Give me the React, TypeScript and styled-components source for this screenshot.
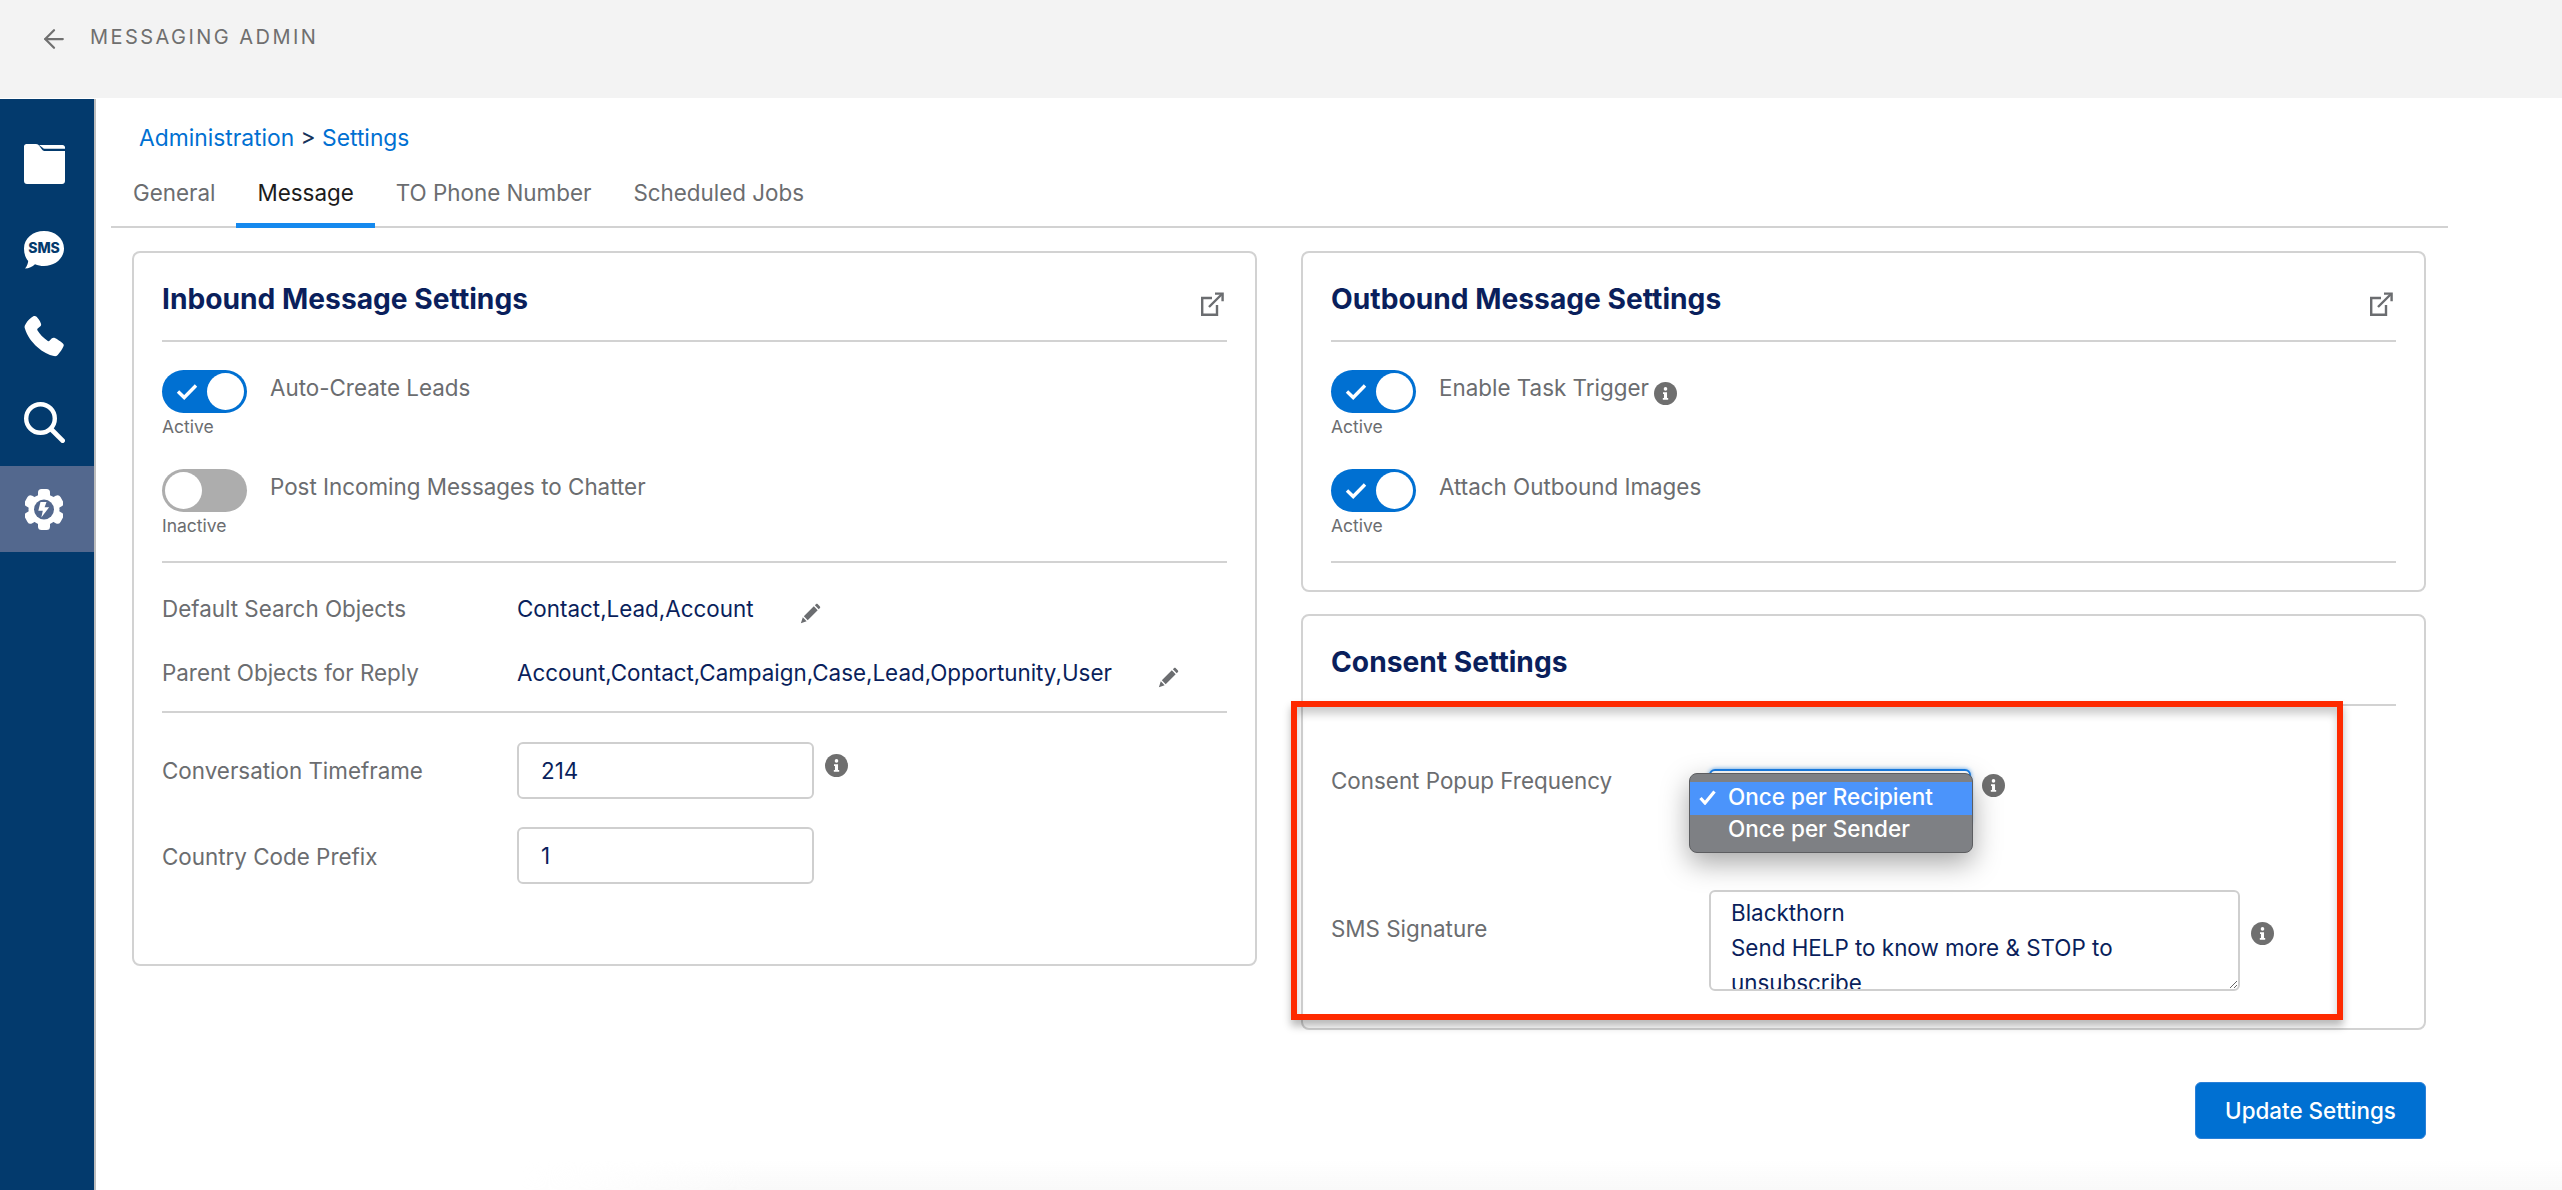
import React from "react"
import styled, { createGlobalStyle } from "styled-components"
import { ArrowLeft } from "lucide-react"

const navy = "#0a1f5c"
const grey = "#6b6d70"
const blue = "#0070d2"

const GlobalStyle = createGlobalStyle`
  * {
    box-sizing: border-box;
  }
  html,
  body {
    margin: 0;
    height: 1190px;
    overflow: hidden;
    background: #fff;
    font-family: Inter, "Noto Sans", sans-serif;
  }
`

const Page = styled.div`
  position: relative;
  height: 1190px;
  display: flex;
  flex-direction: column;
`

const Header = styled.header`
  height: 98px;
  flex: none;
  background: #f3f3f3;
  display: flex;
  align-items: flex-start;
  padding: 22px 0 0 39px;
  color: ${grey};
`

const BackArrow = styled(ArrowLeft)`
  width: 30px;
  height: 30px;
  margin-top: 2px;
  color: #707070;
`

const AppName = styled.div`
  margin-left: 21px;
  font-size: 20px;
  line-height: 30px;
  letter-spacing: 2.45px;
  text-transform: uppercase;
  color: #6f6f6f;
`

const Body = styled.div`
  flex: 1;
  display: flex;
  min-height: 0;
`

const Sidebar = styled.nav`
  width: 96px;
  flex: none;
  margin-top: 1px;
  padding-top: 22px;
  background: #033a6d;
  border-right: 2px solid #bdbdbd;
`

const NavItem = styled.div<{ $active?: boolean }>`
  height: 86px;
  display: flex;
  align-items: center;
  justify-content: center;
  padding-right: 6px;
  background: ${(props) => (props.$active ? "#53688e" : "transparent")};
  margin-top: ${(props) => (props.$active ? "1px" : "0")};
`

const SmsBubble = styled.div`
  position: relative;
  width: 40px;
  height: 38px;
`

const SmsText = styled.span`
  position: absolute;
  left: 0;
  right: 0;
  top: 8px;
  text-align: center;
  font-size: 14px;
  line-height: 17px;
  font-weight: 800;
  color: #033a6d;
`

const Main = styled.main`
  flex: 1;
  min-width: 0;
  padding: 25px 114px 0 15px;
`

const Breadcrumb = styled.div`
  margin-left: 28px;
  font-size: 22.8px;
  line-height: 30px;
  color: #16325c;
`

const Crumb = styled.a`
  color: ${blue};
  text-decoration: none;
`

const TabBar = styled.div`
  display: flex;
  margin-top: 25px;
  padding-left: 1px;
  border-bottom: 2px solid #d2d2d2;
`

const Tab = styled.div<{ $active?: boolean }>`
  padding: 0 21px 15px;
  margin-bottom: -2px;
  font-size: 22.4px;
  line-height: 30px;
  color: ${(props) => (props.$active ? "#1c1c1c" : grey)};
  border-bottom: 5px solid ${(props) => (props.$active ? "#1589ee" : "transparent")};
`

const Columns = styled.div`
  display: grid;
  grid-template-columns: 1125px 1125px;
  column-gap: 44px;
  align-items: start;
  margin: 23px 0 0 21px;
`

const Stack = styled.div`
  display: flex;
  flex-direction: column;
  gap: 22px;
`

const Card = styled.section<{ $bottom: number }>`
  position: relative;
  border: 2px solid #d2d2d2;
  border-radius: 8px;
  padding: 0 28px ${(props) => props.$bottom}px;
  background: #fff;
`

const CardHeader = styled.div<{ $gap?: number }>`
  display: flex;
  justify-content: space-between;
  align-items: flex-start;
  padding: 29px 3px ${(props) => props.$gap ?? 24}px 0;
  border-bottom: 2px solid #d2d2d2;
`

const Title = styled.h2`
  margin: 0;
  font-size: 28.2px;
  line-height: 34px;
  font-weight: 700;
  color: ${navy};
`

const ExternalIcon = styled.svg`
  width: 24px;
  height: 24px;
  margin-top: 10px;
  color: ${grey};
`

const Section = styled.div<{ $top: number; $bottom: number; $ruled?: boolean }>`
  padding: ${(props) => props.$top}px 0 ${(props) => props.$bottom}px;
  border-bottom: ${(props) => (props.$ruled ? "2px solid #d2d2d2" : "none")};
`

const ToggleRow = styled.div`
  display: flex;
  align-items: flex-start;
  height: 67px;
  & + & {
    margin-top: 32px;
  }
`

const ToggleColumn = styled.div`
  width: 85px;
  flex: none;
  margin-right: 23px;
`

const ToggleTrack = styled.div<{ $on: boolean }>`
  width: 85px;
  height: 43px;
  padding: 3px;
  border-radius: 22px;
  display: flex;
  align-items: center;
  justify-content: ${(props) => (props.$on ? "flex-end" : "flex-start")};
  position: relative;
  background: ${(props) => (props.$on ? blue : "#adadad")};
`

const ToggleKnob = styled.div`
  width: 37px;
  height: 37px;
  border-radius: 50%;
  background: #fff;
`

const ToggleCheck = styled.svg`
  position: absolute;
  left: 14px;
  top: 13px;
  width: 22px;
  height: 17px;
`

const ToggleState = styled.div`
  font-size: 17.5px;
  line-height: 20px;
  margin-top: 4px;
  color: ${grey};
`

const ToggleLabel = styled.div`
  display: flex;
  align-items: flex-start;
  margin-top: 3px;
  font-size: 22.4px;
  line-height: 30px;
  color: ${grey};
`

const InfoIcon = styled.svg<{ $top: number; $left: number }>`
  width: 23px;
  height: 23px;
  flex: none;
  margin-top: ${(props) => props.$top}px;
  margin-left: ${(props) => props.$left}px;
`

const ValueRow = styled.div`
  display: flex;
  font-size: 22.4px;
  line-height: 30px;
  & + & {
    margin-top: 34px;
  }
`

const FieldLabel = styled.div<{ $width: number; $top?: number }>`
  width: ${(props) => props.$width}px;
  flex: none;
  margin-top: ${(props) => props.$top ?? 0}px;
  font-size: 22.4px;
  line-height: 30px;
  color: ${grey};
`

const FieldValue = styled.div`
  color: ${navy};
`

const PencilIcon = styled.svg`
  width: 21px;
  height: 21px;
  flex: none;
  margin: 9px 0 0 46px;
  color: ${grey};
`

const FieldRow = styled.div`
  display: flex;
  align-items: flex-start;
  & + & {
    margin-top: 28px;
  }
`

const TextInput = styled.input`
  width: 297px;
  height: 57px;
  padding: 0 22px;
  border: 2px solid #cfcfcf;
  border-radius: 6px;
  outline: none;
  font: inherit;
  font-size: 22.4px;
  color: ${navy};
`

const ConsentBody = styled.div`
  padding: 60px 0 0;
`

const ConsentRow = styled.div`
  display: flex;
  align-items: flex-start;
  & + & {
    margin-top: 64px;
  }
`

const SelectWrap = styled.div`
  position: relative;
  margin-top: 3px;
  width: 262px;
  height: 57px;
  border: 2px solid #1a7fe8;
  border-radius: 6px;
  box-shadow: 0 0 4px #5aa7f0;
  background: #fff;
`

const Dropdown = styled.div`
  position: absolute;
  left: -22px;
  top: 2px;
  width: 284px;
  height: 80px;
  padding-top: 8px;
  border: 1px solid #5c5d60;
  border-radius: 8px;
  background: #7e8084;
  box-shadow: 0 10px 28px rgba(0, 0, 0, 0.35);
  z-index: 2;
`

const DropdownOption = styled.div<{ $selected?: boolean }>`
  height: ${(props) => (props.$selected ? 33 : 32)}px;
  padding-left: 38px;
  position: relative;
  font-size: 22.5px;
  line-height: ${(props) => (props.$selected ? 30 : 28)}px;
  font-weight: 500;
  color: #fff;
  background: ${(props) => (props.$selected ? "#4b94fb" : "transparent")};
`

const DropdownCheck = styled.svg`
  position: absolute;
  left: 9px;
  top: 8px;
  width: 17px;
  height: 15px;
`

const SignatureBox = styled.textarea`
  width: 531px;
  height: 101px;
  padding: 3px 22px 0 20px;
  border: 2px solid #cfcfcf;
  border-radius: 6px;
  outline: none;
  overflow: hidden;
  font: inherit;
  font-size: 22.4px;
  line-height: 35px;
  color: ${navy};
`

const Annotation = styled.div`
  position: absolute;
  left: -12px;
  top: 85px;
  width: 1052px;
  height: 319px;
  border: 6px solid #fe2a00;
  box-shadow: 0 6px 8px rgba(0, 0, 0, 0.28), inset 0 7px 9px rgba(0, 0, 0, 0.2);
  pointer-events: none;
`

const Footer = styled.div`
  display: flex;
  justify-content: flex-end;
  margin: 52px 22px 0 0;
`

const PrimaryButton = styled.button`
  width: 231px;
  height: 57px;
  border: 1px solid #2a80d8;
  border-radius: 6px;
  background: ${blue};
  color: #fff;
  font: inherit;
  font-size: 22.4px;
  font-weight: 500;
`

const BottomFade = styled.div`
  position: absolute;
  left: 520px;
  right: 0;
  bottom: 0;
  height: 30px;
  background: linear-gradient(rgba(250, 250, 250, 0), #f9f9f9);
  mask-image: linear-gradient(to right, transparent, #000 12%);
  pointer-events: none;
`

const Info: React.FC<{ top: number; left: number }> = ({ top, left }) => (
  <InfoIcon $top={top} $left={left} viewBox="0 0 24 24">
    <circle cx="12" cy="12" r="12" fill="#6f6f6f" />
    <circle cx="12" cy="7.2" r="1.9" fill="#fff" />
    <path d="M9.4 10.6h4.2v6.2h1.2v1.8H9.2v-1.8h1.2v-4.4h-1z" fill="#fff" />
  </InfoIcon>
)

const Pencil = () => (
  <PencilIcon viewBox="0 0 24 24" fill="currentColor">
    <path d="M1 23l2.2-6.6 4.4 4.4zM4.4 15.2L15.8 3.8l4.4 4.4L8.8 19.6zM17 2.6l1.4-1.4c.5-.5 1.2-.5 1.7 0l2.7 2.7c.5.5.5 1.2 0 1.7L21.4 7z" />
  </PencilIcon>
)

const External = () => (
  <ExternalIcon viewBox="0 0 24 24" fill="none" stroke="currentColor" strokeWidth="2.4">
    <path d="M12 6H2.2v16.8H17V13" />
    <path d="M9 15L22 2" />
    <path d="M15 1.6h7.6v7.6" />
  </ExternalIcon>
)

const Toggle: React.FC<{ on: boolean; label: string; children?: React.ReactNode }> = ({
  on,
  label,
  children,
}) => (
  <ToggleRow>
    <ToggleColumn>
      <ToggleTrack $on={on}>
        {on && (
          <ToggleCheck viewBox="0 0 22 17" fill="none" stroke="#fff" strokeWidth="3.4">
            <path d="M2 8.5l6.2 6L20 2.5" />
          </ToggleCheck>
        )}
        <ToggleKnob />
      </ToggleTrack>
      <ToggleState>{on ? "Active" : "Inactive"}</ToggleState>
    </ToggleColumn>
    <ToggleLabel>
      {label}
      {children}
    </ToggleLabel>
  </ToggleRow>
)

const FolderIcon = () => (
  <svg width="41" height="40" viewBox="0 0 41 40" fill="#fff">
    <path d="M2.5 0h9.5c1.6 0 2.6.8 3.4 2L18 5.6c.5.9 1.3 1.4 2.4 1.4H41v30c0 1.7-1.3 3-3 3H3c-1.7 0-3-1.3-3-3V2.5C0 1.1 1.1 0 2.5 0z" />
    <path d="M15 0.9h23.5c1.4 0 2.5 1 2.5 2.4v1.5H20.6c-.9 0-1.5-.4-1.9-1.1z" />
  </svg>
)

const SmsIcon = () => (
  <SmsBubble>
    <svg width="40" height="38" viewBox="0 0 40 38" fill="#fff">
      <path d="M20 0c11 0 20 7.4 20 17.4S31 35 20 35c-3.2 0-6.3-.6-9-1.8-2.6 2.6-6 4-10 4.4 1.8-2.2 3-4.8 3.2-7.6C1.4 26.9 0 22.5 0 17.4 0 7.4 9 0 20 0z" />
    </svg>
    <SmsText>SMS</SmsText>
  </SmsBubble>
)

const PhoneIcon = () => (
  <svg width="41" height="41" viewBox="0 0 41 41" fill="#fff">
    <path d="M9.3.3c1.1-.5 2.4-.4 3.3.5 1.7 1.7 3.4 4.3 4.3 6.6.5 1.2.2 2.4-.8 3.2l-2.4 2c-.5.4-.6 1-.3 1.6 2.1 3.6 6.1 7.9 10.4 10.7.6.4 1.2.3 1.7-.2l2.1-2.2c.9-.9 2.2-1.1 3.3-.6 2.6 1.3 5.4 3.2 8 5.5.8.7 1.1 1.8.6 2.8-1.3 2.8-3.3 6-5.8 8.7-1 1.1-2.3 1.5-3.7 1.2C20 38.3 5.3 27.2.8 12.3.3 10.7.6 9.3 1.7 7.9 3.6 4.8 6.3 2 9.3.3z" />
  </svg>
)

const SearchIcon = () => (
  <svg width="41" height="41" viewBox="0 0 41 41" fill="none" stroke="#fff">
    <circle cx="16.5" cy="16.5" r="14.3" strokeWidth="4.4" />
    <path d="M27.2 27.2L38.6 38.6" strokeWidth="4.8" strokeLinecap="round" />
  </svg>
)

const gearTeeth = [0, 60, 120, 180, 240, 300]

const GearIcon = () => (
  <svg width="38" height="41" viewBox="0 0 38 41">
    <circle cx="19" cy="20.5" r="15.5" fill="#fff" />
    {gearTeeth.map((angle) => (
      <rect
        key={angle}
        x="13"
        y="0"
        width="12"
        height="11"
        rx="3.5"
        fill="#fff"
        transform={`rotate(${angle} 19 20.5)`}
      />
    ))}
    <circle cx="19" cy="20.5" r="10" fill="#53688e" />
    <path fill="#fff" d="M21.5 13h-6l-2.2 8.8h4.5L16.3 28.5l7.8-10.2h-4.5z" />
  </svg>
)

export default function App() {
  return (
    <Page>
      <GlobalStyle />
      <Header>
        <BackArrow strokeWidth={1.8} />
        <AppName>Messaging Admin</AppName>
      </Header>
      <Body>
        <Sidebar>
          <NavItem>
            <FolderIcon />
          </NavItem>
          <NavItem>
            <SmsIcon />
          </NavItem>
          <NavItem>
            <PhoneIcon />
          </NavItem>
          <NavItem>
            <SearchIcon />
          </NavItem>
          <NavItem $active>
            <GearIcon />
          </NavItem>
        </Sidebar>
        <Main>
          <Breadcrumb>
            <Crumb>Administration</Crumb> &gt; <Crumb>Settings</Crumb>
          </Breadcrumb>
          <TabBar>
            <Tab>General</Tab>
            <Tab $active>Message</Tab>
            <Tab>TO Phone Number</Tab>
            <Tab>Scheduled Jobs</Tab>
          </TabBar>
          <Columns>
            <Card $bottom={80}>
              <CardHeader>
                <Title>Inbound Message Settings</Title>
                <External />
              </CardHeader>
              <Section $top={28} $bottom={25} $ruled>
                <Toggle on label="Auto-Create Leads" />
                <Toggle on={false} label="Post Incoming Messages to Chatter" />
              </Section>
              <Section $top={31} $bottom={23} $ruled>
                <ValueRow>
                  <FieldLabel $width={355}>Default Search Objects</FieldLabel>
                  <FieldValue>Contact,Lead,Account</FieldValue>
                  <Pencil />
                </ValueRow>
                <ValueRow>
                  <FieldLabel $width={355}>Parent Objects for Reply</FieldLabel>
                  <FieldValue>Account,Contact,Campaign,Case,Lead,Opportunity,User</FieldValue>
                  <Pencil />
                </ValueRow>
              </Section>
              <Section $top={29} $bottom={0}>
                <FieldRow>
                  <FieldLabel $width={355} $top={14}>
                    Conversation Timeframe
                  </FieldLabel>
                  <TextInput readOnly defaultValue="214" />
                  <Info top={12} left={11} />
                </FieldRow>
                <FieldRow>
                  <FieldLabel $width={355} $top={15}>
                    Country Code Prefix
                  </FieldLabel>
                  <TextInput readOnly defaultValue="1" />
                </FieldRow>
              </Section>
            </Card>
            <Stack>
              <Card $bottom={27}>
                <CardHeader>
                  <Title>Outbound Message Settings</Title>
                  <External />
                </CardHeader>
                <Section $top={28} $bottom={25} $ruled>
                  <Toggle on label="Enable Task Trigger">
                    <Info top={9} left={5} />
                  </Toggle>
                  <Toggle on label="Attach Outbound Images" />
                </Section>
              </Card>
              <Card $bottom={37}>
                <CardHeader $gap={25}>
                  <Title>Consent Settings</Title>
                </CardHeader>
                <ConsentBody>
                  <ConsentRow>
                    <FieldLabel $width={378}>Consent Popup Frequency</FieldLabel>
                    <SelectWrap>
                      <Dropdown>
                        <DropdownOption $selected>
                          <DropdownCheck viewBox="0 0 17 15" fill="none" stroke="#fff" strokeWidth="3.2">
                            <path d="M1.5 8l4.5 5L15.5 1.5" />
                          </DropdownCheck>
                          Once per Recipient
                        </DropdownOption>
                        <DropdownOption>Once per Sender</DropdownOption>
                      </Dropdown>
                    </SelectWrap>
                    <Info top={8} left={11} />
                  </ConsentRow>
                  <ConsentRow>
                    <FieldLabel $width={378} $top={24}>
                      SMS Signature
                    </FieldLabel>
                    <SignatureBox
                      readOnly
                      defaultValue={"Blackthorn\nSend HELP to know more & STOP to unsubscribe"}
                    />
                    <Info top={32} left={11} />
                  </ConsentRow>
                </ConsentBody>
                <Annotation />
              </Card>
            </Stack>
          </Columns>
          <Footer>
            <PrimaryButton>Update Settings</PrimaryButton>
          </Footer>
        </Main>
      </Body>
      <BottomFade />
    </Page>
  )
}
